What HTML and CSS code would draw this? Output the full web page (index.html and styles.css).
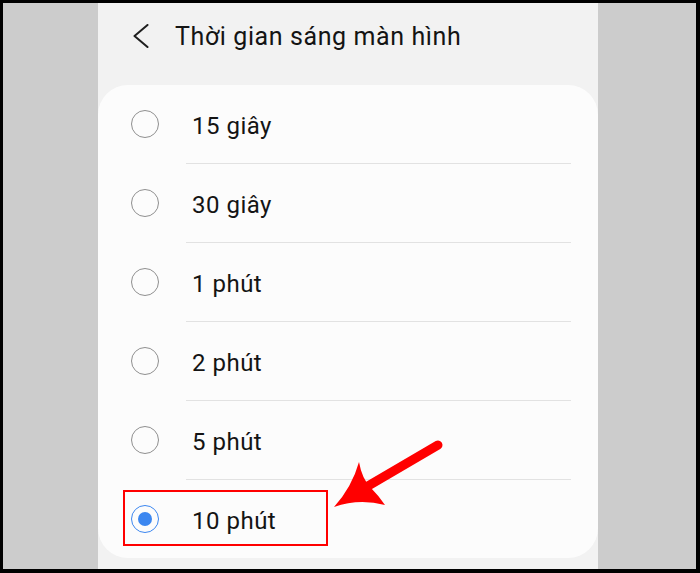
FILE: index.html
```html
<!doctype html>
<html lang="vi">
<head>
<meta charset="utf-8" />
<title>Thời gian sáng màn hình</title>
<link rel="stylesheet" href="styles.css">
</head>
<body>
<div class="frame">
  <div class="screen">
    <!-- thanh tiêu đề -->
    <header class="topbar">
      <svg class="back" width="16" height="24" viewBox="0 0 16 24">
        <polyline points="14.5,1 1.5,12 14.5,23" fill="none" stroke="#1e1e1e" stroke-width="2" stroke-linecap="round" stroke-linejoin="round"/>
      </svg>
      <h1 class="title">Thời gian sáng màn hình</h1>
    </header>

    <!-- danh sách lựa chọn -->
    <ul class="options">
      <li class="option"><span class="radio"></span><span class="label">15 giây</span></li>
      <li class="divider"></li>
      <li class="option"><span class="radio"></span><span class="label">30 giây</span></li>
      <li class="divider"></li>
      <li class="option"><span class="radio"></span><span class="label">1 phút</span></li>
      <li class="divider"></li>
      <li class="option"><span class="radio"></span><span class="label">2 phút</span></li>
      <li class="divider"></li>
      <li class="option"><span class="radio"></span><span class="label">5 phút</span></li>
      <li class="divider"></li>
      <li class="option"><span class="radio checked"></span><span class="label">10 phút</span></li>
    </ul>
  </div>

  <!-- chú thích màu đỏ -->
  <div class="mark"></div>
  <svg class="arrow" width="700" height="573" viewBox="0 0 700 573">
    <line x1="438" y1="445" x2="368" y2="486" stroke="#ff0000" stroke-width="9" stroke-linecap="round"/>
    <path d="M334,507 Q352,487 359,462 Q362,479 371,488 Q379,496 385,505 Q359,498 334,507 Z" fill="#ff0000"/>
  </svg>
</div>
</body>
</html>
```

FILE: styles.css
```css
* { box-sizing: border-box; }
body { margin: 0; font-family: Roboto, "Noto Sans", sans-serif; color: #141414; }

.frame { position: relative; width: 700px; height: 573px; background: #cccccc; border: solid #000; border-width: 3px 4px 4px 3px; padding-left: 95px; overflow: hidden; }
.screen { width: 500px; height: 100%; background: #f2f2f2; }

.topbar { display: flex; align-items: center; height: 66px; padding-left: 35px; }
.back { display: block; flex: none; }
.title { margin: 0 0 0 26px; font-size: 25px; font-weight: 400; letter-spacing: 0.6px; }

.options { list-style: none; margin: 16px 0 0; padding: 0; background: #fcfcfc; border-radius: 30px; height: 473px; }
.option { display: flex; align-items: center; height: 78px; padding: 3px 0 0 33px; }
.divider { height: 1px; margin: 0 27px 0 88px; background: #e2e2e2; }

.radio { flex: none; width: 28px; height: 28px; margin: -3px 33px 0 0; border: 1.5px solid #8f8f8f; border-radius: 50%; }
.radio.checked { border-color: #3c87f0; position: relative; }
.radio.checked::after { content: ''; position: absolute; left: 5.5px; top: 5.5px; width: 14px; height: 14px; border-radius: 50%; background: #3c87f0; }
.label { font-size: 24px; letter-spacing: 0.5px; }

.mark { position: absolute; left: 120px; top: 487px; width: 205px; height: 56px; border: 2px solid #ff0000; }
.arrow { position: absolute; left: -3px; top: -3px; }
```
